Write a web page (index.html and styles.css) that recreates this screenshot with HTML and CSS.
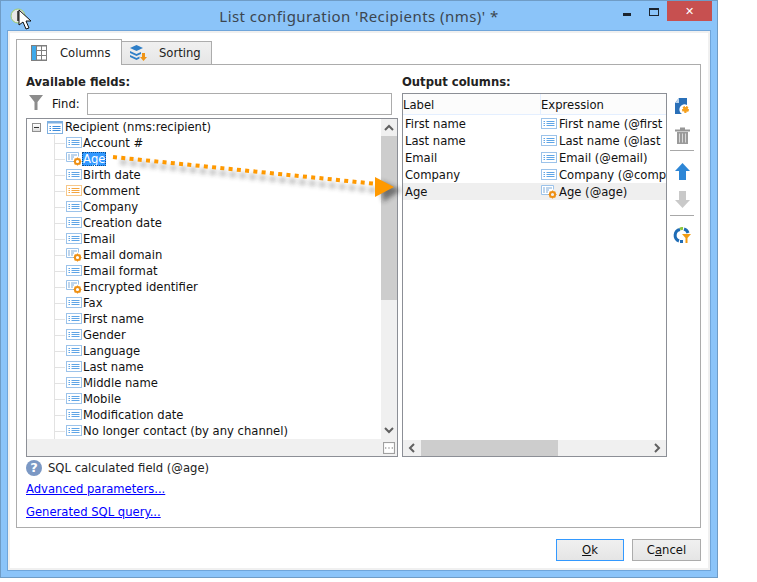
FILE: index.html
```html
<!DOCTYPE html>
<html lang="en">
<head>
<meta charset="utf-8">
<title>List configuration</title>
<link rel="stylesheet" href="styles.css">
</head>
<body>
<svg class="sprite" width="0" height="0" aria-hidden="true">
  <defs>
    <symbol id="fld" viewBox="0 0 16 12">
      <rect x=".5" y=".5" width="15" height="10" fill="#fff" stroke="#9cc3ea"/>
      <path d="M2.500 3.500h1.500M5.500 3.500h8M2.500 5.500h1.500M5.500 5.500h8M2.500 7.500h1.500M5.500 7.500h8" stroke="#5fa5e6" fill="none"/>
    </symbol>
    <symbol id="fldr" viewBox="0 0 16 13">
      <rect x=".5" y=".5" width="15" height="12" fill="#fff" stroke="#7fb0e0"/>
      <path d="M1 1.500h14" stroke="#7fb0e0" stroke-width="2"/>
      <path d="M2.500 5.500h1.500M5.500 5.500h8M2.500 7.500h1.500M5.500 7.500h8M2.500 9.500h1.500M5.500 9.500h8" stroke="#3f8ddc" fill="none"/>
    </symbol>
    <symbol id="fldo" viewBox="0 0 16 12">
      <rect x=".5" y=".5" width="15" height="10" fill="#fff" stroke="#f7c88a"/>
      <path d="M2.500 3.500h1.500M5.500 3.500h8M2.500 5.500h1.500M5.500 5.500h8M2.500 7.500h1.500M5.500 7.500h8" stroke="#f3a540" fill="none"/>
    </symbol>
    <symbol id="fldc" viewBox="0 0 16 14">
      <path d="M8 9.500H.5V.5h12v4" fill="#fff" stroke="#9cc3ea"/>
      <path d="M2 3h2M5 3h6M2 5h2M5 5h3M2 7h2M5 7h2" stroke="#7fabd8" fill="none"/>
      <circle cx="11.500" cy="9.500" r="2.600" fill="none" stroke="#ee9015" stroke-width="2"/>
      <path d="M11.500 5.500v1.500M11.500 12v1.500M7.500 9.500h1.500M14 9.500h1.500M8.700 6.700l1 1M13.300 11.300l1 1M14.300 6.700l-1 1M9.700 11.300l-1 1" stroke="#ee9015" stroke-width="1.200"/>
    </symbol>
  </defs>
</svg>

<div class="window">
  <header class="titlebar">
    <span class="title">List configuration 'Recipients (nms)' *</span>
    <div class="controls">
      <span class="min"></span>
      <span class="max"></span>
      <span class="close">✕</span>
    </div>
  </header>

  <div class="client">
    <nav class="tabs">
      <div class="tab active">
        <svg class="tabicon" width="16" height="16" viewBox="0 0 16 16">
          <rect width="16" height="16" fill="#7f7f7f"/>
          <rect x="1" y="1" width="4" height="14" fill="#3ea9ea"/>
          <path d="M6 1.500h4v3.500h-4zM11 1.500h4v3.500h-4zM6 6h4v4h-4zM11 6h4v4h-4zM6 11h4v3.500h-4zM11 11h4v3.500h-4z" fill="#fff"/>
        </svg>
        <span>Columns</span>
      </div>
      <div class="tab">
        <svg class="tabicon" width="17" height="16" viewBox="0 0 17 16">
          <path d="M6.500 0l6.500 3-6.500 3L0 3z" fill="#2f7fc8"/>
          <path d="M0 6l6.500 3L11 7v2l-4.500 2L0 8zM0 10l6.500 3 3-1.400V13.500l-3 1.500L0 12z" fill="#2f7fc8"/>
          <path d="M12 8h3v4h2l-3.500 4-3.500-4h2z" fill="#ef9416"/>
        </svg>
        <span>Sorting</span>
      </div>
    </nav>

    <main class="panel">
      <div class="columns">
        <section class="left">
          <h2 class="heading">Available fields:</h2>
          <div class="find">
            <svg class="funnel" width="14" height="15" viewBox="0 0 14 15"><path d="M0 0h14L8.500 7v8h-3V7z" fill="#8c8c8c"/></svg>
            <label class="findlabel">Find:</label>
            <div class="input"></div>
          </div>
          <div class="treebox">
            <div class="treebody">
              <div class="tree">
                <div class="root">
                  <span class="expander"></span>
                  <svg class="rooticon" width="16" height="13"><use href="#fldr"/></svg>
                  <span>Recipient (nms:recipient)</span>
                </div>
                <ul class="items">
                  <li class="item"><svg class="ficon" width="16" height="12"><use href="#fld"/></svg><span>Account #</span></li>
                  <li class="item"><svg class="ficon" width="16" height="14"><use href="#fldc"/></svg><span class="selected">Age</span></li>
                  <li class="item"><svg class="ficon" width="16" height="12"><use href="#fld"/></svg><span>Birth date</span></li>
                  <li class="item"><svg class="ficon" width="16" height="12"><use href="#fldo"/></svg><span>Comment</span></li>
                  <li class="item"><svg class="ficon" width="16" height="12"><use href="#fld"/></svg><span>Company</span></li>
                  <li class="item"><svg class="ficon" width="16" height="12"><use href="#fld"/></svg><span>Creation date</span></li>
                  <li class="item"><svg class="ficon" width="16" height="12"><use href="#fld"/></svg><span>Email</span></li>
                  <li class="item"><svg class="ficon" width="16" height="14"><use href="#fldc"/></svg><span>Email domain</span></li>
                  <li class="item"><svg class="ficon" width="16" height="12"><use href="#fld"/></svg><span>Email format</span></li>
                  <li class="item"><svg class="ficon" width="16" height="14"><use href="#fldc"/></svg><span>Encrypted identifier</span></li>
                  <li class="item"><svg class="ficon" width="16" height="12"><use href="#fld"/></svg><span>Fax</span></li>
                  <li class="item"><svg class="ficon" width="16" height="12"><use href="#fld"/></svg><span>First name</span></li>
                  <li class="item"><svg class="ficon" width="16" height="12"><use href="#fld"/></svg><span>Gender</span></li>
                  <li class="item"><svg class="ficon" width="16" height="12"><use href="#fld"/></svg><span>Language</span></li>
                  <li class="item"><svg class="ficon" width="16" height="12"><use href="#fld"/></svg><span>Last name</span></li>
                  <li class="item"><svg class="ficon" width="16" height="12"><use href="#fld"/></svg><span>Middle name</span></li>
                  <li class="item"><svg class="ficon" width="16" height="12"><use href="#fld"/></svg><span>Mobile</span></li>
                  <li class="item"><svg class="ficon" width="16" height="12"><use href="#fld"/></svg><span>Modification date</span></li>
                  <li class="item"><svg class="ficon" width="16" height="12"><use href="#fld"/></svg><span>No longer contact (by any channel)</span></li>
                </ul>
              </div>
              <div class="vscroll">
                <svg class="sarrow" width="16" height="17" viewBox="0 0 16 17"><path d="M4 11l4-4 4 4" fill="none" stroke="#606060" stroke-width="2"/></svg>
                <div class="vthumb"></div>
                <div class="vrest"></div>
                <svg class="sarrow" width="16" height="17" viewBox="0 0 16 17"><path d="M4 6l4 4 4-4" fill="none" stroke="#606060" stroke-width="2"/></svg>
              </div>
            </div>
            <div class="treefoot">
              <svg class="more" width="11" height="11" viewBox="0 0 11 11"><rect x=".5" y=".5" width="10" height="10" fill="#fff" stroke="#a0a0a0"/><path d="M2 5.500h1M5 5.500h1M8 5.500h1" stroke="#555"/></svg>
            </div>
          </div>
        </section>

        <section class="right">
          <h2 class="heading">Output columns:</h2>
          <div class="listrow">
            <div class="listbox">
              <div class="listhead">
                <div class="hlabel">Label</div>
                <div class="hexpr">Expression</div>
              </div>
              <div class="rows">
                <div class="row"><div class="clabel">First name</div><div class="cexpr"><svg class="ficon" width="16" height="12"><use href="#fld"/></svg><span>First name (@first</span></div></div>
                <div class="row"><div class="clabel">Last name</div><div class="cexpr"><svg class="ficon" width="16" height="12"><use href="#fld"/></svg><span>Last name (@last</span></div></div>
                <div class="row"><div class="clabel">Email</div><div class="cexpr"><svg class="ficon" width="16" height="12"><use href="#fld"/></svg><span>Email (@email)</span></div></div>
                <div class="row"><div class="clabel">Company</div><div class="cexpr"><svg class="ficon" width="16" height="12"><use href="#fld"/></svg><span>Company (@comp</span></div></div>
                <div class="row current"><div class="clabel">Age</div><div class="cexpr"><svg class="ficon" width="16" height="14"><use href="#fldc"/></svg><span>Age (@age)</span></div></div>
              </div>
              <div class="hscroll">
                <svg class="harrow" width="18" height="16" viewBox="0 0 18 16"><path d="M11 4L7 8l4 4" fill="none" stroke="#606060" stroke-width="2"/></svg>
                <div class="hthumb"></div>
                <div class="hrest"></div>
                <svg class="harrow" width="18" height="16" viewBox="0 0 18 16"><path d="M7 4l4 4-4 4" fill="none" stroke="#606060" stroke-width="2"/></svg>
              </div>
            </div>
            <aside class="toolbar">
              <svg class="tool t-add" width="16" height="17" viewBox="0 0 16 17">
                <path d="M5 0h8v7a5 5 0 0 0-5 9H1V5z" fill="#2a70b8"/><path d="M5 0v5H1z" fill="#bcd5ee"/>
                <circle cx="11.500" cy="11.500" r="2.500" fill="#f5a01e" stroke="#f5a01e" stroke-width="2" stroke-dasharray="2 1"/>
              </svg>
              <svg class="tool t-del" width="15" height="17" viewBox="0 0 15 17">
                <path d="M5 1.500h5M0 3.500h15" stroke="#969696" stroke-width="2" fill="none"/>
                <path d="M2 5h11v12H2z" fill="#9a9a9a"/><path d="M4.500 6.500v9M7.500 6.500v9M10.500 6.500v9" stroke="#d8d8d8"/>
              </svg>
              <div class="sep sep1"></div>
              <svg class="tool t-up" width="15" height="17" viewBox="0 0 15 17"><path d="M7.500 0L15 8h-4v9H4V8H0z" fill="#2d86d6"/></svg>
              <svg class="tool t-down" width="15" height="17" viewBox="0 0 15 17"><path d="M7.500 17L15 9h-4V0H4v9H0z" fill="#c9c9c9"/></svg>
              <div class="sep sep2"></div>
              <svg class="tool t-ref" width="18" height="17" viewBox="0 0 18 17">
                <path d="M7 2.500A6 6 0 0 0 6 14" fill="none" stroke="#1f6cb5" stroke-width="3"/>
                <path d="M7 2a6 6 0 0 1 3-.5" fill="none" stroke="#8cc63f" stroke-width="3"/>
                <path d="M11 2a6 6 0 0 1 4 4" fill="none" stroke="#1f6cb5" stroke-width="3"/>
                <path d="M7 14.500h3" stroke="#1f6cb5" stroke-width="3"/>
                <path d="M9 7h9l-3.500 4v5h-2v-5z" fill="#f39c12"/>
              </svg>
            </aside>
          </div>
        </section>
      </div>

      <div class="info">
        <span class="help">?</span>
        <span>SQL calculated field (@age)</span>
      </div>
      <a class="link first" href="#">Advanced parameters...</a>
      <a class="link" href="#">Generated SQL query...</a>
    </main>

    <footer class="buttons">
      <button class="btn default" type="button"><u>O</u>k</button>
      <button class="btn" type="button">C<u>a</u>ncel</button>
    </footer>
  </div>

  <svg class="arrow" width="300" height="60" viewBox="0 0 300 60">
    <defs><filter id="blur" x="-5%" y="-50%" width="110%" height="200%"><feGaussianBlur stdDeviation="2.500"/></filter></defs>
    <g filter="url(#blur)" opacity=".55">
      <path d="M12 13L272 42" stroke="#333" stroke-width="4" stroke-dasharray="5 5" fill="none"/>
      <path d="M272 32l20 9-18 12z" fill="#222"/>
    </g>
    <path d="M4 8L268 35" stroke="#f90" stroke-width="4" stroke-dasharray="4 4.300" fill="none"/>
    <path d="M266 28l19 10-19 10z" fill="#f90"/>
  </svg>
  <svg class="cursor" width="14" height="21" viewBox="0 0 14 21">
    <path d="M1 1v15l4-3 3 7 3-1-3-7h5z" fill="#fff" stroke="#111" stroke-width="1"/>
  </svg>
  <svg class="appicon" width="16" height="16" viewBox="0 0 16 16">
    <circle cx="8" cy="8" r="7" fill="#e8e8e8" stroke="#9ccb72"/>
    <path d="M8 3v10" stroke="#555" stroke-width="2"/>
  </svg>
</div>
</body>
</html>
```

FILE: styles.css
```css
* { box-sizing: border-box; }
html, body { margin: 0; padding: 0; background: #fff; }
body {
  width: 757px;
  height: 582px;
  overflow: hidden;
  font-family: "DejaVu Sans", sans-serif;
  font-size: 11.6px;
  color: #111;
}
.sprite { position: absolute; }
svg { display: block; flex: none; }

.window {
  position: relative;
  width: 718px;
  height: 578px;
  display: flex;
  flex-direction: column;
  background: #8bc4f9;
  border: 1px solid #6f9cc6;
  padding: 0 6px 6px 6px;
}
.titlebar {
  height: 29px;
  flex: none;
  position: relative;
  display: flex;
  justify-content: center;
  align-items: center;
}
.title {
  font-family: "Noto Sans", sans-serif;
  font-size: 15px;
  letter-spacing: .45px;
  color: #3c4650;
}
.controls {
  position: absolute;
  right: -1px;
  top: 0;
  display: flex;
  align-items: flex-start;
}
.min {
  width: 8px;
  height: 3px;
  background: #1c2530;
  margin-top: 12px;
  margin-right: 18px;
}
.max {
  width: 10px;
  height: 8px;
  border: 1px solid #1c2530;
  border-top-width: 2px;
  margin-top: 7px;
  margin-right: 8px;
}
.close {
  width: 45px;
  height: 20px;
  background: #c75050;
  color: #fff;
  font-size: 11px;
  font-weight: bold;
  display: flex;
  align-items: center;
  justify-content: center;
}

.client {
  flex: 1;
  background: #fff;
  border: 1px solid #6fa5da;
  box-shadow: inset 0 0 0 2px #f0f0f0;
  padding: 8px 9px 8px 8px;
  display: flex;
  flex-direction: column;
}

.tabs {
  display: flex;
  align-items: flex-end;
  height: 25px;
  position: relative;
  z-index: 1;
  flex: none;
}
.tab {
  display: flex;
  align-items: center;
  height: 23px;
  width: 90px;
  border: 1px solid #acacac;
  border-bottom: 0;
  border-left: 0;
  background: linear-gradient(#f0f0f0, #e6e6e6);
  padding-left: 8px;
  gap: 12px;
  color: #222;
}
.tab.active {
  height: 26px;
  width: 106px;
  margin-bottom: -1px;
  border-left: 1px solid #acacac;
  background: #fff;
  padding-left: 14px;
  gap: 13px;
}

.panel {
  height: 464px;
  flex: none;
  border: 1px solid #acacac;
  padding: 9px 0 0 9px;
  display: flex;
  flex-direction: column;
  align-items: flex-start;
}
.columns { display: flex; gap: 4px; }
.heading {
  margin: 0;
  font-size: 11.6px;
  line-height: 17px;
  height: 19px;
  font-weight: bold;
  color: #222;
}
.left { width: 372px; }
.find { display: flex; align-items: center; height: 22px; }
.funnel { margin-left: 3px; margin-bottom: 3px; }
.findlabel { margin-left: 9px; width: 35px; }
.input { width: 305px; height: 22px; border: 1px solid #acacac; background: #fff; }

.treebox {
  margin-top: 3px;
  height: 339px;
  border: 1px solid #8c8f96;
  background: #f0f0f0;
  display: flex;
  flex-direction: column;
}
.treebody { display: flex; height: 320px; }
.tree { flex: 1; background: #fff; overflow: hidden; }
.root { display: flex; align-items: center; height: 16px; padding-left: 5px; }
.expander {
  width: 9px;
  height: 9px;
  border: 1px solid #909090;
  background: linear-gradient(#fff, #dcdcdc);
  position: relative;
  margin-right: 6px;
}
.expander::after {
  content: "";
  position: absolute;
  left: 1px;
  top: 3px;
  width: 5px;
  height: 1px;
  background: #333;
}
.rooticon { margin-right: 2px; }
.items {
  list-style: none;
  margin: 0 0 0 27px;
  padding: 0;
  border-left: 1px solid #e2e2e2;
}
.item {
  display: flex;
  align-items: center;
  height: 16px;
  padding-left: 11px;
  position: relative;
  white-space: nowrap;
}
.item::before {
  content: "";
  position: absolute;
  left: 0;
  top: 8px;
  width: 10px;
  height: 1px;
  background: #e2e2e2;
}
.ficon { margin-right: 1px; }
.selected {
  background: #3399ff;
  color: #fff;
  outline: 1px dotted #0b4f92;
  outline-offset: -1px;
  padding: 0 1px;
  margin-left: -1px;
}

.vscroll { width: 16px; display: flex; flex-direction: column; background: #f0f0f0; }
.sarrow { flex: none; }
.vthumb { height: 164px; background: #cdcdcd; }
.vrest { flex: 1; }
.treefoot { flex: 1; display: flex; justify-content: flex-end; align-items: center; padding-right: 2px; }
.more { width: 12px; height: 12px; }

.right { width: 292px; }
.listrow { display: flex; }
.listbox {
  width: 267px;
  height: 364px;
  border: 1px solid #8c8f96;
  background: #fff;
  display: flex;
  flex-direction: column;
}
.listhead {
  display: flex;
  height: 21px;
  flex: none;
  background: #fcfcfc;
  border-bottom: 1px solid #e4efff;
  line-height: 22px;
}
.hlabel { width: 138px; border-right: 1px solid #e4efff; }
.hexpr { flex: 1; overflow: hidden; }
.rows { flex: 1; }
.row { display: flex; height: 17px; align-items: center; }
.row.current { background: #efefef; }
.clabel { width: 138px; padding-left: 2px; }
.cexpr { display: flex; align-items: center; flex: 1; min-width: 0; gap: 1px; white-space: nowrap; overflow: hidden; }
.hscroll { display: flex; height: 16px; flex: none; background: #f0f0f0; }
.harrow { flex: none; }
.hthumb { width: 137px; background: #cdcdcd; }
.hrest { flex: 1; }

.toolbar { width: 25px; margin-left: 3px; display: flex; flex-direction: column; align-items: center; }
.t-add { margin-top: 5px; }
.t-del { margin-top: 12px; }
.sep { width: 24px; height: 1px; background: #a8a8a8; flex: none; }
.sep1 { margin-top: 6px; }
.t-up { margin-top: 12px; }
.t-down { margin-top: 11px; }
.sep2 { margin-top: 7px; }
.t-ref { margin-top: 11px; }

.info { display: flex; align-items: center; gap: 6px; height: 18px; margin-top: 2px; color: #222; }
.help {
  width: 16px;
  height: 16px;
  border-radius: 50%;
  background: #7b98c4;
  color: #fff;
  font-weight: bold;
  font-size: 13px;
  text-align: center;
  line-height: 16px;
}
.link { color: #0000ff; text-decoration: underline; line-height: 16px; margin-bottom: 7px; }
.link.first { margin-top: 4px; }

.buttons { display: flex; justify-content: flex-end; gap: 8px; margin-top: 11px; margin-right: 0; }
.btn {
  width: 69px;
  height: 22px;
  padding: 0;
  font: inherit;
  color: #111;
  border: 1px solid #acacac;
  background: linear-gradient(#f0f0f0, #e5e5e5);
  border-radius: 0;
}
.btn.default { width: 68px; border-color: #3399ff; }

.arrow { position: absolute; left: 108px; top: 148px; pointer-events: none; z-index: 3; }
.cursor { position: absolute; left: 17px; top: 8px; z-index: 5; }
.appicon { position: absolute; left: 9px; top: 7px; z-index: 4; }
```
